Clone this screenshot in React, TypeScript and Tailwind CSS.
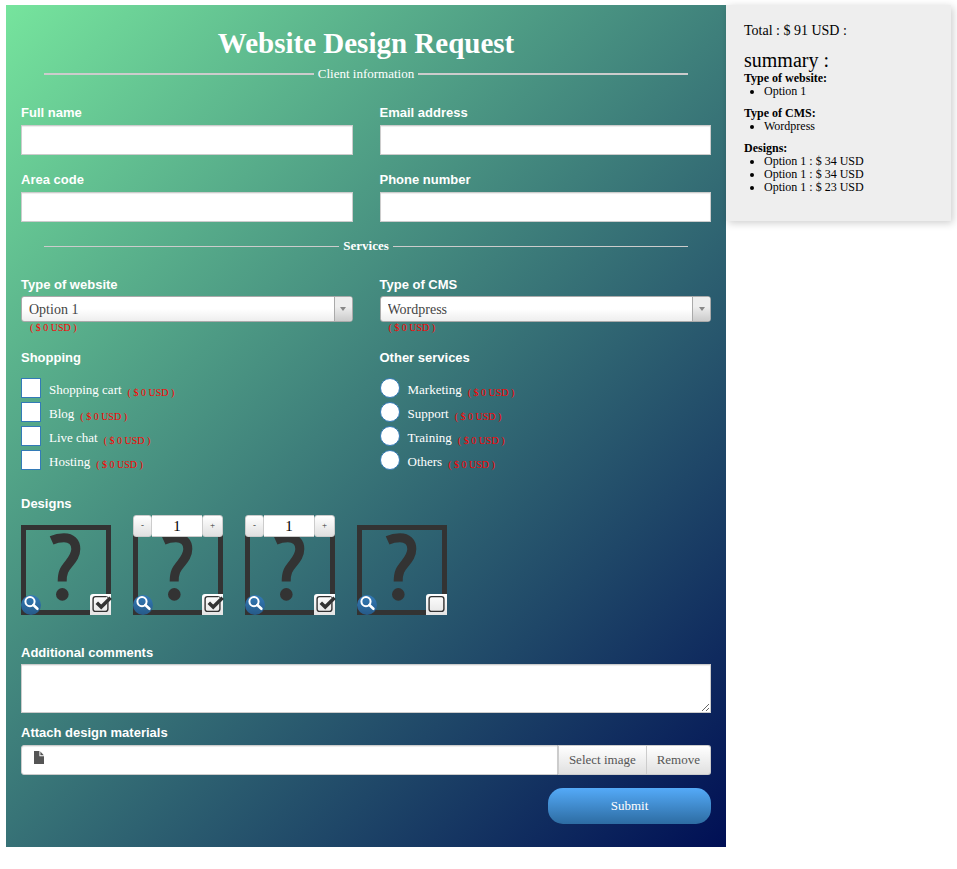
import { useState } from "react";
import type { ReactNode } from "react";

const fieldLabel =
  "block text-[13px] leading-5 font-bold font-['Liberation_Sans',Arial,sans-serif]";
const inputBox =
  "block w-full border border-[#ccc] bg-white text-[#555] shadow-[inset_0_1px_1px_rgba(0,0,0,0.075)] outline-none";

function Price() {
  return <span className="text-[10px] text-[#f00]">( $ 0 USD )</span>;
}

function TextField({ id, label, type = "text" }: { id: string; label: string; type?: string }) {
  return (
    <div>
      <label htmlFor={id} className={fieldLabel}>
        {label}
      </label>
      <input id={id} type={type} className={`${inputBox} mt-0.5 h-[30px] px-3 text-sm`} />
    </div>
  );
}

function SelectField({ id, label, options }: { id: string; label: string; options: string[] }) {
  return (
    <div>
      <label htmlFor={id} className={fieldLabel}>
        {label}
      </label>
      <div className="relative mt-px">
        <select
          id={id}
          className="block h-[26px] w-full appearance-none rounded-[3px] border border-[#aaa] bg-[linear-gradient(#fff_50%,#eee)] pl-[7px] pr-6 text-[14px] text-[#444] outline-none"
        >
          {options.map((o) => (
            <option key={o}>{o}</option>
          ))}
        </select>
        <span className="pointer-events-none absolute inset-y-px right-px flex w-[18px] items-center justify-center rounded-r-[2px] border-l border-[#aaa] bg-[linear-gradient(#eee_40%,#ccc)]">
          <svg width="6" height="4" viewBox="0 0 6 4" fill="#888">
            <path d="M0 0h6L3 4z" />
          </svg>
        </span>
      </div>
      <div className="flex pl-[9px] leading-3">
        <Price />
      </div>
    </div>
  );
}

function Choice({ type, name, label }: { type: "checkbox" | "radio"; name: string; label: string }) {
  const shape = type === "radio" ? "rounded-full" : "";
  return (
    <label className="flex h-6 items-start">
      <input
        type={type}
        name={name}
        className={`size-5 appearance-none border border-[#337ab7] bg-white checked:bg-[#337ab7] ${shape}`}
      />
      <span className="ml-2 text-[13px] leading-6">{label}</span>
      <span className="ml-1.5 flex leading-[30px]">
        <Price />
      </span>
    </label>
  );
}

function Divider({ thick = false, children }: { thick?: boolean; children: ReactNode }) {
  const line = thick ? "flex-1 border-t-2 border-[#ccc]" : "flex-1 border-t border-[#ccc]";
  return (
    <div className="mx-[23px] flex items-center gap-1 text-[13px] leading-5">
      <span className={line} />
      {children}
      <span className={line} />
    </div>
  );
}

function DesignTile({ index, initial, counter }: { index: number; initial: boolean; counter: boolean }) {
  const [checked, setChecked] = useState(initial);
  const [qty, setQty] = useState(1);
  const step =
    "flex items-center justify-center rounded-[3px] border border-[#ccc] bg-[linear-gradient(#fff,#e0e0e0)] text-[9px] text-[#333]";
  return (
    <div className="relative size-[90px] border-[5px] border-[#333]">
      {/* placeholder artwork: hook and dot */}
      <svg className="block size-full" viewBox="5 5 80 80" fill="none" aria-hidden="true">
        <path
          d="M30.6 15.4C35 13.4 39 12.8 43 12.8C50.5 12.8 54.8 17 54.8 24C54.8 30 51.5 34 48 38.5C43.5 44 41.2 47 41.2 56.6"
          stroke="#333"
          strokeWidth="9"
        />
        <circle cx="41.3" cy="69.4" r="6.3" fill="#333" />
      </svg>
      {counter && (
        <div className="absolute -top-[15px] -left-[5px] flex h-[22px] w-[90px]">
          <button type="button" aria-label="Decrease" className={`${step} w-[19px]`} onClick={() => setQty(Math.max(1, qty - 1))}>
            -
          </button>
          <input
            aria-label={`Quantity of design ${index}`}
            value={qty}
            onChange={(e) => setQty(Number(e.target.value) || 1)}
            className="min-w-0 flex-1 border-y border-[#ccc] bg-white text-center text-[15px] text-black outline-none"
          />
          <button type="button" aria-label="Increase" className={`${step} w-[21px]`} onClick={() => setQty(qty + 1)}>
            +
          </button>
        </div>
      )}
      <button
        type="button"
        aria-label={`Preview design ${index}`}
        className="absolute -bottom-[5px] -left-[5px] size-5 rounded-full bg-[linear-gradient(#337ab7,#265a88)]"
      >
        <svg width="20" height="20" viewBox="0 0 20 20" fill="none" stroke="#fff">
          <circle cx="9" cy="6.6" r="4.6" strokeWidth="2" />
          <path d="M12.4 10l4 3.8" strokeWidth="2.6" strokeLinecap="round" />
        </svg>
      </button>
      <label className="absolute -right-[5px] -bottom-[5px] block size-[21px] rounded-tl-[3px] bg-[linear-gradient(#fff,#e4e4e4)]">
        <input
          type="checkbox"
          aria-label={`Design ${index}`}
          checked={checked}
          onChange={(e) => setChecked(e.target.checked)}
          className="absolute inset-0 size-full opacity-0"
        />
        <svg className="overflow-visible" width="21" height="21" viewBox="0 0 21 21" fill="none" stroke="#333">
          <rect x="3.1" y="2.6" width="14.8" height="14.8" rx="2.4" strokeWidth="1.4" />
          {checked && (
            <>
              <path d="M8 8.4l3.4 3L18.4 4.6" stroke="#f4f4f4" strokeWidth="5" />
              <path d="M6.8 8.8l4.4 4.2L20.6 3.8" strokeWidth="3.6" />
            </>
          )}
        </svg>
      </label>
    </div>
  );
}

function SummaryGroup({ title, items }: { title: string; items: string[] }) {
  return (
    <section className="mb-[9px]">
      <h3 className="font-bold">{title}</h3>
      <ul className="list-disc pl-5">
        {items.map((item, i) => (
          <li key={i}>{item}</li>
        ))}
      </ul>
    </section>
  );
}

export default function App() {
  return (
    <main className="flex items-start px-1.5 pt-[5px] font-['Liberation_Serif','Times_New_Roman',serif]">
      <form
        onSubmit={(e) => e.preventDefault()}
        className="min-w-0 flex-1 bg-[linear-gradient(135deg,#76e49d,#000f55)] px-[15px] pb-[23px] text-white"
      >
        <h1 className="pt-5 pb-[3px] text-center text-[29px] leading-9 font-bold">Website Design Request</h1>
        <Divider thick>
          <span>Client information</span>
        </Divider>

        <div className="mt-[19px] grid grid-cols-2 gap-x-[27px] gap-y-[15px]">
          <TextField id="name" label="Full name" />
          <TextField id="email" label="Email address" type="email" />
          <TextField id="area" label="Area code" />
          <TextField id="phone" label="Phone number" type="tel" />
        </div>

        <div className="mt-[14px]">
          <Divider>
            <b>Services</b>
          </Divider>
        </div>

        <div className="mt-[19px] grid grid-cols-2 gap-x-[27px] gap-y-[14px]">
          <SelectField id="website" label="Type of website" options={["Option 1", "Option 2"]} />
          <SelectField id="cms" label="Type of CMS" options={["Wordpress", "Joomla"]} />
          <fieldset>
            <legend className={`${fieldLabel} mb-[10px]`}>Shopping</legend>
            {["Shopping cart", "Blog", "Live chat", "Hosting"].map((l) => (
              <Choice key={l} type="checkbox" name="shopping" label={l} />
            ))}
          </fieldset>
          <fieldset>
            <legend className={`${fieldLabel} mb-[10px]`}>Other services</legend>
            {["Marketing", "Support", "Training", "Others"].map((l) => (
              <Choice key={l} type="radio" name="other" label={l} />
            ))}
          </fieldset>
        </div>

        <fieldset className="mt-5">
          <legend className={fieldLabel}>Designs</legend>
          <div className="mt-[11px] flex flex-wrap gap-[22px]">
            <DesignTile index={1} initial counter={false} />
            <DesignTile index={2} initial counter />
            <DesignTile index={3} initial counter />
            <DesignTile index={4} initial={false} counter={false} />
          </div>
        </fieldset>

        <div className="mt-7">
          <label htmlFor="comments" className={fieldLabel}>
            Additional comments
          </label>
          <textarea id="comments" className={`${inputBox} mt-px h-[49px] resize px-3 py-1 text-sm`} />
        </div>

        <div className="mt-[10px]">
          <label htmlFor="file" className={fieldLabel}>
            Attach design materials
          </label>
          <div className="mt-0.5 flex h-[30px] text-[13px] text-[#555]">
            <div className="relative min-w-0 flex-1">
              <input id="file" readOnly className={`${inputBox} h-full rounded-l-[3px] pl-8`} />
              <svg className="absolute top-[6px] left-[13px]" width="10" height="13" viewBox="0 0 10 13" fill="#555">
                <path d="M0 0h5.4v5.2H10V13H0z" />
                <path d="M6.4 .6l3.4 3.6H6.4z" />
              </svg>
            </div>
            <button type="button" className="border border-[#ccc] bg-[linear-gradient(#fff,#e0e0e0)] px-[10px]">
              Select image
            </button>
            <button type="button" className="rounded-r-[3px] border border-l-0 border-[#ccc] bg-[linear-gradient(#fff,#e0e0e0)] px-[10px]">
              Remove
            </button>
          </div>
        </div>

        <div className="mt-[13px] flex justify-end">
          <button
            type="submit"
            className="h-9 w-[163px] rounded-[15px] bg-[linear-gradient(#54aaf8,#2d6ca2)] text-[13px]"
          >
            Submit
          </button>
        </div>
      </form>

      <aside className="w-[225px] bg-[#eee] px-[18px] pt-4 pb-[18px] text-[12px] leading-[13px] text-black shadow-[2px_2px_8px_rgba(0,0,0,0.2)]">
        <p className="text-[14px] leading-5">Total : $ 91 USD :</p>
        <h2 className="mt-[7px] text-[20px] leading-6">summary :</h2>
        <SummaryGroup title="Type of website:" items={["Option 1"]} />
        <SummaryGroup title="Type of CMS:" items={["Wordpress"]} />
        <SummaryGroup
          title="Designs:"
          items={["Option 1 : $ 34 USD", "Option 1 : $ 34 USD", "Option 1 : $ 23 USD"]}
        />
      </aside>
    </main>
  );
}
